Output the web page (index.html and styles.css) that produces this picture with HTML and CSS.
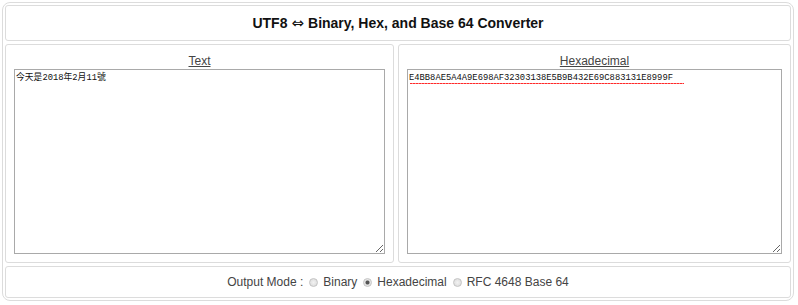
FILE: index.html
```html
<!DOCTYPE html>
<html lang="en">
  <head>
    <meta charset="UTF-8" />
    <title>UTF8 Binary, Hex, and Base 64 Converter</title>
    <link rel="stylesheet" href="styles.css">
  </head>
  <body>
    <div class="converter">
      <div class="box header">UTF8 <span class="arrow">&hArr;</span> Binary, Hex, and Base 64 Converter</div>

      <div class="panels">
        <div class="box panel">
          <label for="text_input">Text</label>
          <textarea id="text_input" spellcheck="false">今天是2018年2月11號</textarea>
        </div>
        <div class="box panel">
          <label for="output">Hexadecimal</label>
          <textarea id="output" class="misspelled" spellcheck="false">E4BB8AE5A4A9E698AF32303138E5B9B432E69C883131E8999F</textarea>
        </div>
      </div>

      <div class="box footer">
        Output Mode :
        <label class="mode"><input type="radio" name="mode" value="bin" /> Binary</label>
        <label class="mode"><input type="radio" name="mode" value="hex" checked /> Hexadecimal</label>
        <label class="mode"><input type="radio" name="mode" value="b64" /> RFC 4648 Base 64</label>
      </div>
    </div>
  </body>
</html>
```

FILE: styles.css
```css
body {
  font-family: "Liberation Sans", Arial, sans-serif;
  background-color: #ffffff;
  color: #333333;
  margin: 0;
  padding: 2px 4px 3px 2px;
}
.converter {
  border: 1px solid #dcdcdc;
  border-radius: 8px;
  padding: 2px;
  display: flex;
  flex-direction: column;
  gap: 3px;
  box-sizing: border-box;
}
.box {
  border: 1px solid #dcdcdc;
  border-radius: 3px;
  box-sizing: border-box;
  flex-shrink: 0;
}
.header {
  height: 36px;
  display: flex;
  align-items: center;
  justify-content: center;
  gap: 4px;
  font-size: 14px;
  font-weight: bold;
  color: #111111;
}
.arrow {
  font-family: "DejaVu Sans", sans-serif;
  font-weight: normal;
  font-size: 15px;
}
.panels {
  display: grid;
  grid-template-columns: 389px 1fr;
  gap: 4px;
  height: 219px;
  flex-shrink: 0;
}
.panel {
  display: flex;
  flex-direction: column;
  align-items: center;
  padding: 9px 8px 8px 8px;
}
.panel label {
  font-size: 12px;
  line-height: 14px;
  text-decoration: underline;
  color: #444444;
}
textarea {
  width: 100%;
  flex: 1;
  margin-top: 1px;
  padding: 2px 1px;
  box-sizing: border-box;
  border: 1px solid #a9a9a9;
  font-family: "Liberation Mono", "Noto Sans CJK SC", monospace;
  font-size: 8.8px;
  line-height: 12px;
  color: #111111;
  resize: vertical;
}
.misspelled {
  background-image: repeating-linear-gradient(90deg, #ff2a2a 0 2px, #ff8080 2px 3px);
  background-repeat: no-repeat;
  background-size: 274px 1px;
  background-position: 2px 13px;
}
.footer {
  height: 32px;
  display: flex;
  align-items: center;
  justify-content: center;
  font-size: 12px;
  color: #444444;
  gap: 3px;
}
.mode {
  display: flex;
  align-items: center;
  gap: 5px;
}
.mode input {
  appearance: none;
  width: 9px;
  height: 9px;
  margin: 0 0 0 3px;
  border: 1px solid #c4c4c4;
  border-radius: 50%;
  background: radial-gradient(circle, #f2f2f2 0%, #d8d8d8 100%);
  box-sizing: border-box;
}
.mode input:checked {
  background: radial-gradient(circle, #555555 0 1.5px, #e6e6e6 2.5px);
}
```
